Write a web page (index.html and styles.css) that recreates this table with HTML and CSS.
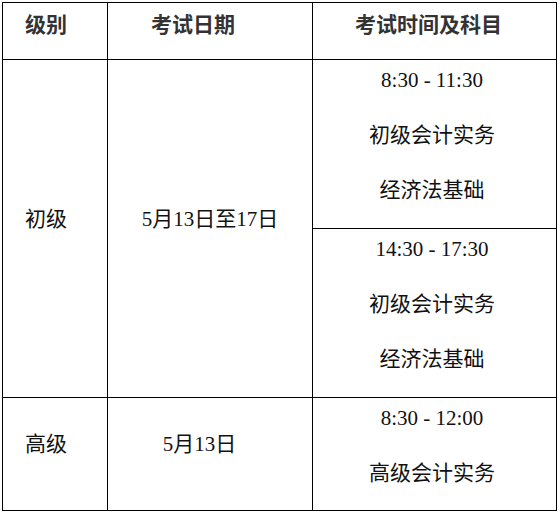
FILE: index.html
```html
<!DOCTYPE html>
<html lang="zh-CN">
<head>
<meta charset="utf-8">
<title>考试时间</title>
<link rel="stylesheet" href="styles.css">
</head>
<body>
<div class="sheet">
  <div class="cell head c1">级别</div>
  <div class="cell head c2 shift-head2">考试日期</div>
  <div class="cell head c3 shift-head3">考试时间及科目</div>

  <div class="cell mid c1 span2">初级</div>
  <div class="cell mid c2 span2 centered">5月13日至17日</div>
  <div class="cell slot c3">
    <p>8:30 - 11:30</p>
    <p>初级会计实务</p>
    <p>经济法基础</p>
  </div>
  <div class="cell slot c3">
    <p>14:30 - 17:30</p>
    <p>初级会计实务</p>
    <p>经济法基础</p>
  </div>

  <div class="cell mid c1">高级</div>
  <div class="cell mid c2 centered shift-date">5月13日</div>
  <div class="cell slot c3">
    <p>8:30 - 12:00</p>
    <p>高级会计实务</p>
  </div>
</div>
</body>
</html>
```
FILE: styles.css
```css
html, body {
  background: #fff;
}
body {
  margin: 2px;
  font-family: "Liberation Serif", "Noto Sans CJK SC", serif;
  font-size: 21px;
  color: #111;
}
.sheet {
  display: grid;
  grid-template-columns: 104px 204px 243px;
  grid-template-rows: 56px 168px 168px 112px;
  gap: 1px;
  padding: 1px;
  background: #000;
  width: max-content;
}
.cell {
  background: #fff;
  line-height: 28px;
  white-space: nowrap;
}
.head {
  padding-top: 6px;
  font-family: "Noto Sans CJK SC", sans-serif;
  font-weight: bold;
  color: #333;
}
.c1 {
  padding-left: 22px;
}
.c2, .c3 {
  text-align: center;
}
.shift-head2 {
  padding-right: 34px;
}
.shift-head3 {
  padding-right: 12px;
}
.span2 {
  grid-row: span 2;
}
.mid {
  display: flex;
  align-items: center;
  padding-bottom: 20px;
}
.mid.centered {
  justify-content: center;
}
.shift-date {
  padding-right: 21px;
}
.slot {
  padding-top: 6px;
  padding-right: 5px;
}
.slot p {
  margin: 0 0 27px;
}
.slot p:last-child {
  margin-bottom: 0;
}
```
